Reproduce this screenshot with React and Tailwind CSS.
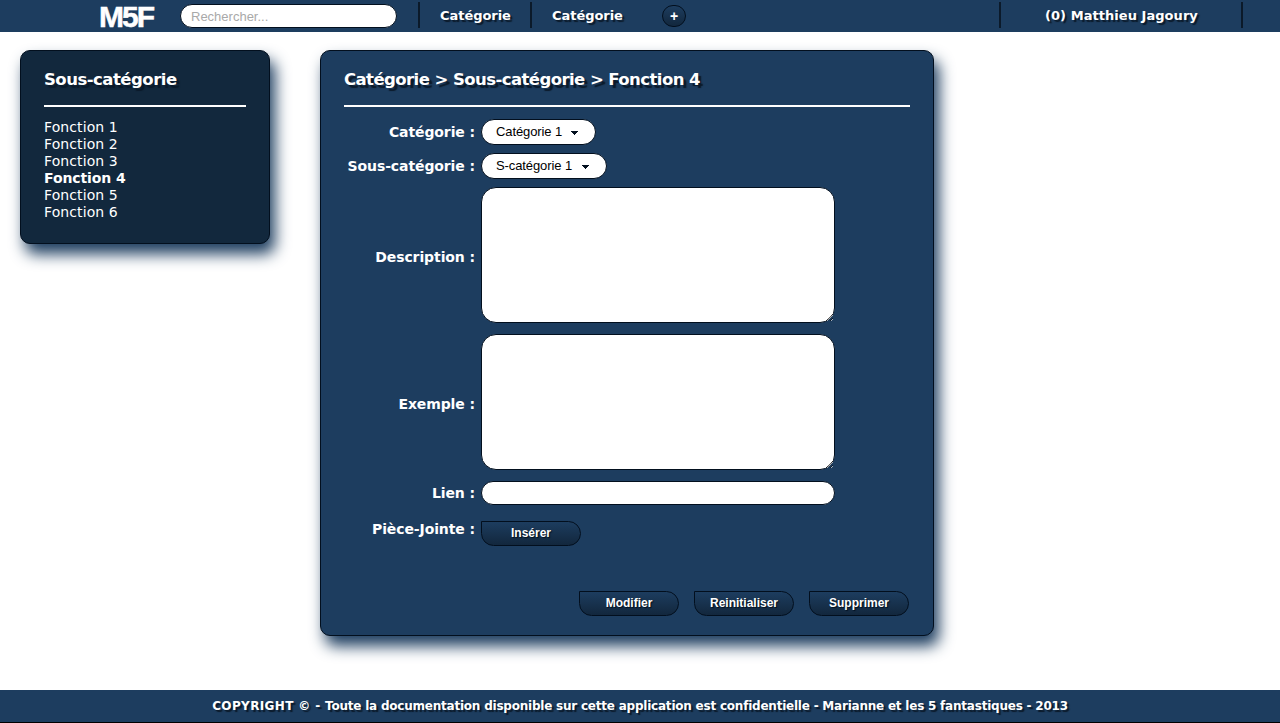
const titleShadow = '[text-shadow:3px_3px_1px_#0b1a2a]';
const smallShadow = '[text-shadow:2px_2px_1px_#0b1a2a]';

function Divider() {
  return <div className="h-[26px] w-[2px] shrink-0 bg-[#0b1a2a]" />;
}

function PillButton({ children }) {
  return (
    <button
      type="button"
      className="h-[25px] w-[100px] rounded-[14px] rounded-tl-none border border-[#020f1e] bg-linear-to-b from-[#1d3d5f] to-[#12273d] pb-[2px] font-['Liberation_Sans',Arial,sans-serif] text-[12px] leading-[20px] font-bold text-white [text-shadow:1px_1px_1px_#020f1e]"
    >
      {children}
    </button>
  );
}

function Select({ label, className }) {
  return (
    <button
      type="button"
      className={`flex h-[26px] items-center justify-between rounded-[13px] border border-[#020f1e] bg-white pr-[17px] pl-[14px] font-['Liberation_Sans',Arial,sans-serif] text-[13px] tracking-[-0.1px] text-black ${className}`}
    >
      <span className="whitespace-nowrap">{label}</span>
      <svg className="mt-px" width="8" height="4" viewBox="0 0 8 4" shapeRendering="crispEdges">
        <path d="M0 0h8L4 4z" fill="#020f1e" />
      </svg>
    </button>
  );
}

function Label({ children, className = '' }) {
  return (
    <div className={`flex w-[131px] shrink-0 justify-end ${className}`}>
      <span className="text-[14px] leading-[17px] font-bold tracking-[-0.1px] whitespace-nowrap">{children}</span>
    </div>
  );
}

function Area() {
  return (
    <textarea className="block h-[136px] w-[354px] resize rounded-[15px] border border-[#020f1e] bg-white" />
  );
}

const functions = [1, 2, 3, 4, 5, 6];

export default function App() {
  return (
    <div className="flex h-[723px] w-[1280px] flex-col overflow-hidden bg-white font-['DejaVu_Sans',Verdana,sans-serif] text-white">
      <header className="flex h-[32px] shrink-0 items-start bg-[#1d3d5f] pt-[2px]">
        <div className="ml-[99px] flex h-[28px] w-[81px] items-center pt-[1px] font-['Liberation_Sans',Arial,sans-serif] text-[30px] leading-[28px] font-bold">
          <span className="pr-[4px] tracking-[-1.9px] [text-shadow:-1px_0_0_#1d3d5f] [-webkit-text-stroke:0.5px_#ffffff]">M5F</span>
        </div>
        <input
          type="text"
          placeholder="Rechercher..."
          className="mt-[2px] h-[24px] w-[217px] rounded-[12px] border border-[#020f1e] bg-white px-[10px] font-['Liberation_Sans',Arial,sans-serif] text-[13px] text-black placeholder:text-[#a9a9a9]"
        />
        <div className="w-[21px]" />
        <Divider />
        <nav className={`flex h-[26px] items-center text-[13px] font-bold ${smallShadow}`}>
          <span className="w-[110px] pt-[2px] pl-[20px] tracking-[-0.05px]">Catégorie</span>
          <Divider />
          <span className="w-[130px] pt-[2px] pl-[20px] tracking-[-0.05px]">Catégorie</span>
        </nav>
        <button
          type="button"
          className="mt-[3px] flex h-[22px] w-[24px] items-center justify-center rounded-full border border-[#020f1e] bg-linear-to-b from-[#1d3d5f] to-[#12273d] font-['Liberation_Sans',Arial,sans-serif] text-[14px] leading-none font-bold"
        >
          +
        </button>
        <div className="w-[313px]" />
        <Divider />
        <div className={`flex h-[26px] w-[240px] items-center pt-[2px] pl-[44px] text-[13px] font-bold tracking-[0.05px] ${smallShadow}`}>
          (0) Matthieu Jagoury
        </div>
        <Divider />
      </header>

      <main className="flex flex-1 items-start gap-[50px] px-[20px] pt-[18px]">
        <aside className="h-[194px] w-[250px] rounded-[10px] border border-[#020f1e] bg-[#12283d] px-[23px] shadow-[5px_10px_15px_#1d3d5f]">
          <h2 className={`flex h-[56px] items-center border-b-2 border-white pt-[4px] text-[16.5px] font-bold tracking-[-0.51px] whitespace-nowrap ${titleShadow}`}>
            <span>Sous-catégorie</span>
          </h2>
          <ul className="pt-[12px] text-[14px] leading-[17px] tracking-[0.1px]">
            {functions.map((n) => (
              <li key={n} className={n === 4 ? 'font-bold tracking-[-0.1px]' : ''}>
                Fonction {n}
              </li>
            ))}
          </ul>
        </aside>

        <section className="h-[586px] w-[614px] rounded-[10px] border border-[#020f1e] bg-[#1d3d5f] px-[23px] shadow-[5px_10px_15px_#1d3d5f]">
          <h1 className={`flex h-[56px] items-center border-b-2 border-white pt-[4px] text-[16.5px] font-bold tracking-[-0.57px] whitespace-nowrap ${titleShadow}`}>
            <span>Catégorie &gt; Sous-catégorie &gt; Fonction 4</span>
          </h1>
          <form className="flex flex-col pt-[12px]">
            <div className="flex items-center gap-[6px]">
              <Label>Catégorie :</Label>
              <Select label="Catégorie 1" className="w-[115px]" />
            </div>
            <div className="mt-[8px] flex items-center gap-[6px]">
              <Label>Sous-catégorie :</Label>
              <Select label="S-catégorie 1" className="w-[126px]" />
            </div>
            <div className="mt-[8px] flex items-center gap-[6px]">
              <Label className="pt-[4px]">Description :</Label>
              <Area />
            </div>
            <div className="mt-[11px] flex items-center gap-[6px]">
              <Label className="pt-[4px]">Exemple :</Label>
              <Area />
            </div>
            <div className="mt-[11px] flex items-center gap-[6px]">
              <Label>Lien :</Label>
              <input type="text" className="h-[24px] w-[354px] rounded-[12px] border border-[#020f1e] bg-white px-[10px] text-black" />
            </div>
            <div className="mt-[16px] flex items-start gap-[6px]">
              <Label>Pièce-Jointe :</Label>
              <PillButton>Insérer</PillButton>
            </div>
            <div className="mt-[45px] flex justify-end gap-[15px] pr-px">
              <PillButton>Modifier</PillButton>
              <PillButton>Reinitialiser</PillButton>
              <PillButton>Supprimer</PillButton>
            </div>
          </form>
        </section>
      </main>

      <footer className={`flex h-[33px] shrink-0 items-center justify-center border-b border-black bg-[#1d3d5f] text-[12px] font-bold tracking-[-0.22px] whitespace-pre ${smallShadow}`}>
        <span className="tracking-[0.36px]">{'COPYRIGHT © - '}</span>
        <span>Toute la documentation disponible sur cette application est confidentielle - Marianne et les 5 fantastiques - 2013</span>
      </footer>
    </div>
  );
}
